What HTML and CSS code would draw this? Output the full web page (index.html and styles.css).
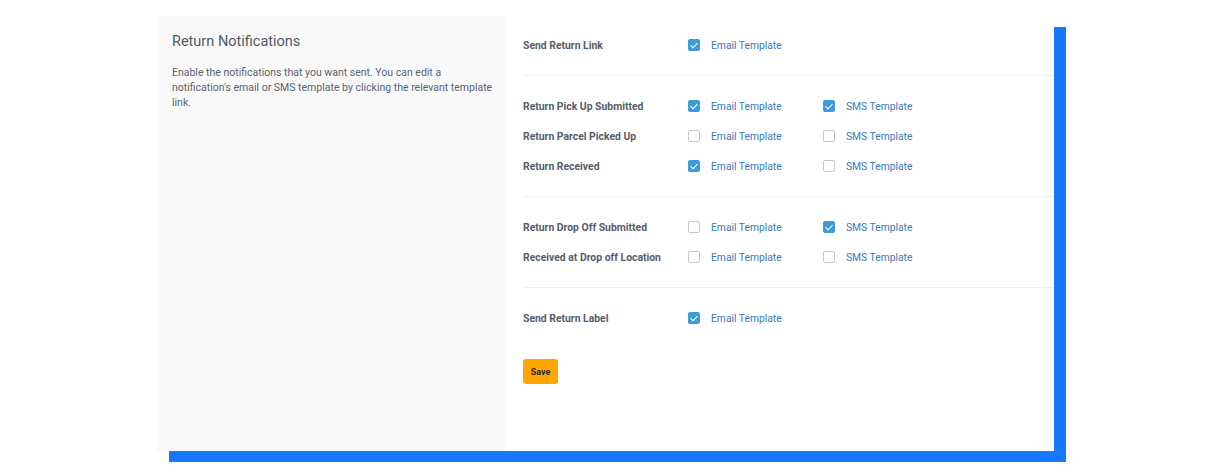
FILE: index.html
```html
<!DOCTYPE html>
<html lang="en">
<head>
    <meta charset="UTF-8">
    <title>Return Notifications</title>
    <link rel="stylesheet" href="styles.css">
</head>
<body>
    <div class="card">
        <!-- 左侧说明 -->
        <div class="side">
            <h2 class="side-title">Return Notifications</h2>
            <p class="side-text">Enable the notifications that you want sent. You can edit a notification's email or SMS template by clicking the relevant template link.</p>
        </div>

        <!-- 右侧设置 -->
        <div class="main">
            <div class="group">
                <div class="row">
                    <span class="row-label">Send Return Link</span>
                    <label class="opt"><span class="box checked"></span><a class="tpl">Email Template</a></label>
                </div>
            </div>

            <div class="group">
                <div class="row">
                    <span class="row-label">Return Pick Up Submitted</span>
                    <label class="opt"><span class="box checked"></span><a class="tpl">Email Template</a></label>
                    <label class="opt"><span class="box checked"></span><a class="tpl">SMS Template</a></label>
                </div>
                <div class="row">
                    <span class="row-label">Return Parcel Picked Up</span>
                    <label class="opt"><span class="box"></span><a class="tpl">Email Template</a></label>
                    <label class="opt"><span class="box"></span><a class="tpl">SMS Template</a></label>
                </div>
                <div class="row">
                    <span class="row-label">Return Received</span>
                    <label class="opt"><span class="box checked"></span><a class="tpl">Email Template</a></label>
                    <label class="opt"><span class="box"></span><a class="tpl">SMS Template</a></label>
                </div>
            </div>

            <div class="group">
                <div class="row">
                    <span class="row-label">Return Drop Off Submitted</span>
                    <label class="opt"><span class="box"></span><a class="tpl">Email Template</a></label>
                    <label class="opt"><span class="box checked"></span><a class="tpl">SMS Template</a></label>
                </div>
                <div class="row">
                    <span class="row-label">Received at Drop off Location</span>
                    <label class="opt"><span class="box"></span><a class="tpl">Email Template</a></label>
                    <label class="opt"><span class="box"></span><a class="tpl">SMS Template</a></label>
                </div>
            </div>

            <div class="group last">
                <div class="row">
                    <span class="row-label">Send Return Label</span>
                    <label class="opt"><span class="box checked"></span><a class="tpl">Email Template</a></label>
                </div>
            </div>

            <button class="save-btn">Save</button>
        </div>
    </div>
</body>
</html>
```

FILE: styles.css
```css
* {
    margin: 0;
    padding: 0;
    box-sizing: border-box;
}

html, body {
    height: 100%;
}

body {
    font-family: Roboto, 'Liberation Sans', sans-serif;
    background-color: #fff;
    padding: 16px 0 0 157px;
}

.card {
    display: flex;
    width: 897px;
    height: 435px;
    background-color: #fff;
    box-shadow: 12px 11px 0 #1677ff;
}

.side {
    width: 348px;
    background-color: #f9f9f9;
    padding: 17px 6px 17px 15px;
}

.side-title {
    font-size: 14.5px;
    font-weight: 400;
    color: #4f5866;
    line-height: 18px;
}

.side-text {
    max-width: 326px;
    margin-top: 14px;
    font-size: 10.5px;
    line-height: 15px;
    color: #5b6270;
}

.main {
    flex: 1;
    padding-left: 18px;
}

.group {
    padding: 14px 0 15px;
    border-bottom: 1px solid #efefef;
}

.group + .group {
    padding-top: 15px;
}

.group.last {
    border-bottom: none;
}

.row {
    display: flex;
    align-items: center;
    height: 30px;
}

.row-label {
    width: 165px;
    font-size: 10.4px;
    font-weight: 700;
    color: #565d68;
}

.opt {
    display: flex;
    align-items: center;
    width: 135px;
    cursor: pointer;
}

.box {
    width: 12px;
    height: 12px;
    border: 1px solid #c4c8cd;
    border-radius: 2px;
    background-color: #fff;
    margin-right: 11px;
    position: relative;
}

.box.checked {
    background-color: #3d9bd8;
    border-color: #3d9bd8;
}

.box.checked::after {
    content: '';
    position: absolute;
    left: 3px;
    top: 1px;
    width: 3px;
    height: 6px;
    border: solid #fff;
    border-width: 0 1.5px 1.5px 0;
    transform: rotate(45deg);
}

.tpl {
    font-size: 10.3px;
    color: #3b78b8;
    text-decoration: none;
}

.save-btn {
    margin-top: 11px;
    width: 35px;
    height: 25px;
    background-color: #ffa500;
    border: none;
    border-radius: 3px;
    font-family: Roboto, 'Liberation Sans', sans-serif;
    font-size: 9px;
    font-weight: 700;
    color: #2b2b2b;
    cursor: pointer;
}
```
